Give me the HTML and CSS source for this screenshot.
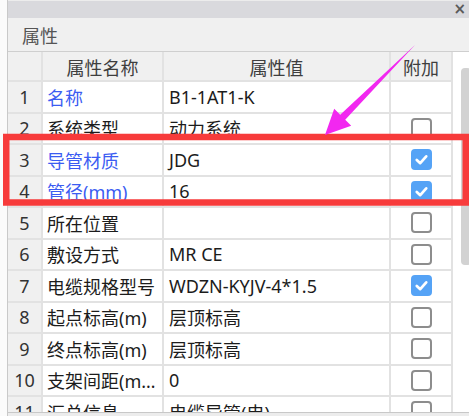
FILE: index.html
```html
<!DOCTYPE html>
<html lang="zh-CN">
<head>
    <meta charset="UTF-8">
    <title>属性</title>
    <link rel="stylesheet" href="styles.css">
</head>
<body>
    <div class="panel">
        <div class="titlebar"><span class="close">×</span></div>
        <div class="section-title">属性</div>
        <div class="body">
            <table class="grid">
                <colgroup>
                    <col class="c-num">
                    <col class="c-name">
                    <col class="c-val">
                    <col class="c-add">
                </colgroup>
                <thead>
                    <tr>
                        <th></th>
                        <th>属性名称</th>
                        <th>属性值</th>
                        <th>附加</th>
                    </tr>
                </thead>
                <tbody>
                    <tr><td class="num">1</td><td class="name blue">名称</td><td class="val">B1-1AT1-K</td><td class="add"></td></tr>
                    <tr><td class="num">2</td><td class="name">系统类型</td><td class="val">动力系统</td><td class="add"><span class="chk"></span></td></tr>
                    <tr><td class="num">3</td><td class="name blue">导管材质</td><td class="val">JDG</td><td class="add"><span class="chk on"><svg viewBox="0 0 20 20"><path d="M5.5 10.5 L8.8 13.5 L14.5 7"/></svg></span></td></tr>
                    <tr><td class="num">4</td><td class="name blue">管径(mm)</td><td class="val">16</td><td class="add"><span class="chk on"><svg viewBox="0 0 20 20"><path d="M5.5 10.5 L8.8 13.5 L14.5 7"/></svg></span></td></tr>
                    <tr><td class="num">5</td><td class="name">所在位置</td><td class="val"></td><td class="add"><span class="chk"></span></td></tr>
                    <tr><td class="num">6</td><td class="name">敷设方式</td><td class="val">MR CE</td><td class="add"><span class="chk"></span></td></tr>
                    <tr><td class="num">7</td><td class="name">电缆规格型号</td><td class="val">WDZN-KYJV-4*1.5</td><td class="add"><span class="chk on"><svg viewBox="0 0 20 20"><path d="M5.5 10.5 L8.8 13.5 L14.5 7"/></svg></span></td></tr>
                    <tr><td class="num">8</td><td class="name">起点标高(m)</td><td class="val">层顶标高</td><td class="add"><span class="chk"></span></td></tr>
                    <tr><td class="num">9</td><td class="name">终点标高(m)</td><td class="val">层顶标高</td><td class="add"><span class="chk"></span></td></tr>
                    <tr><td class="num">10</td><td class="name">支架间距(mm)</td><td class="val">0</td><td class="add"><span class="chk"></span></td></tr>
                    <tr><td class="num">11</td><td class="name">汇总信息</td><td class="val">电缆导管(电)</td><td class="add"><span class="chk"></span></td></tr>
                </tbody>
            </table>
            <div class="vscroll"><div class="thumb"></div></div>
        </div>
        <div class="hscroll"></div>
    </div>

    <!-- annotation drawn over the screenshot -->
    <svg class="mark" viewBox="0 0 469 416" width="469" height="416">
        <rect x="6.25" y="137" width="459.5" height="65.5" fill="none" stroke="#f73b3b" stroke-width="6.5"/>
        <polygon points="415,45 345.2,119.8 351.2,125.8 325,135 334.2,108.8 340.2,114.8" fill="#f227f0"/>
    </svg>
</body>
</html>
```

FILE: styles.css
```css
* {
    margin: 0;
    padding: 0;
    box-sizing: border-box;
}

body {
    width: 469px;
    height: 416px;
    overflow: hidden;
    background: #fbfbfb;
    font-family: "Noto Sans", "Noto Sans CJK SC", sans-serif;
    font-size: 18px;
    color: #1c1c1c;
    position: relative;
}

.panel {
    margin-left: 7px;
    height: 416px;
    border-left: 1px solid #c9c9c9;
    background: #fff;
    display: flex;
    flex-direction: column;
    overflow: hidden;
}

.titlebar {
    height: 18px;
    flex: none;
    background: #d9d9dd;
    border-top: 1px solid #ececec;
    display: flex;
    justify-content: flex-end;
    align-items: center;
    padding-right: 3px;
}

.close {
    font-family: "DejaVu Sans", sans-serif;
    font-size: 15px;
    line-height: 1;
    color: #5a5a5a;
    font-weight: bold;
}

.section-title {
    height: 34px;
    flex: none;
    background: #f0f0f0;
    border-bottom: 1px solid #cfcfcf;
    color: #555;
    padding-left: 14px;
    display: flex;
    align-items: center;
}

.body {
    flex: 1;
    display: flex;
    overflow: hidden;
}

.grid {
    width: 444px;
    flex: none;
    table-layout: fixed;
    border-collapse: collapse;
}

.c-num { width: 34px; }
.c-name { width: 121px; }
.c-val { width: 227px; }
.c-add { width: 62px; }

.grid th {
    height: 27px;
    background: #f0f0f0;
    font-weight: normal;
    color: #3e3e3e;
    border: 2px solid #e2e2e2;
    border-top: none;
    text-align: center;
    padding-top: 2px;
    white-space: nowrap;
}

.grid td {
    height: 31.5px;
    border: 2px solid #e2e2e2;
    white-space: nowrap;
    overflow: hidden;
    text-overflow: ellipsis;
}

.grid th:first-child, .grid td:first-child {
    border-left: none;
}

.num {
    background: #f0f0f0;
    text-align: center;
    color: #333;
}

.name {
    padding-left: 4px;
}

.val {
    padding-left: 5px;
}

.blue {
    color: #3b5cf2;
}

.add {
    text-align: center;
    line-height: 0;
}

.chk {
    display: inline-block;
    width: 21px;
    height: 21px;
    border: 2px solid #8d8d8d;
    border-radius: 4px;
    background: #fff;
}

.chk.on {
    background: #55a3f6;
    border-color: #55a3f6;
}

.chk svg {
    width: 100%;
    height: 100%;
    margin: -2px;
    width: 21px;
    height: 21px;
}

.chk svg path {
    fill: none;
    stroke: #fff;
    stroke-width: 2.6;
    stroke-linecap: round;
    stroke-linejoin: round;
}

.vscroll {
    flex: 1;
    background: #fff;
    padding: 16px 0 0 8px;
}

.thumb {
    width: 10px;
    height: 197px;
    background: #d2d2d2;
    border-radius: 4px;
}

.hscroll {
    height: 4px;
    flex: none;
    background: #ececec;
    border-top: 1px solid #c8c8c8;
}

.mark {
    position: absolute;
    left: 0;
    top: 0;
    pointer-events: none;
}
```
